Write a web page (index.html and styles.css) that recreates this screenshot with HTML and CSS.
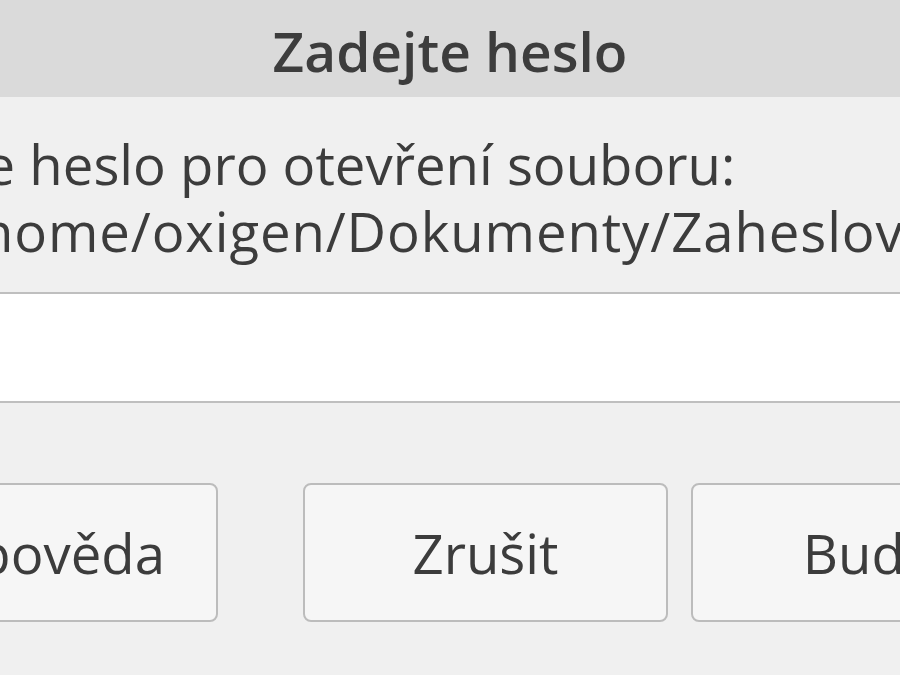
FILE: index.html
```html
<!DOCTYPE html>
<html lang="cs">
<head>
<meta charset="utf-8">
<title>Zadejte heslo</title>
<link rel="stylesheet" href="styles.css">
</head>
<body>
<div class="dialog">
  <header class="titlebar">Zadejte heslo</header>
  <div class="message">
    <div class="line line-prompt">Zadejte heslo pro otevření souboru:</div>
    <div class="line line-path">/home/oxigen/Dokumenty/Zaheslovaný.odt</div>
  </div>
  <div class="entry" aria-label="Heslo"></div>
  <div class="buttons">
    <button class="btn btn-help">Nápověda</button>
    <button class="btn">Zrušit</button>
    <button class="btn">Budiž</button>
  </div>
</div>
</body>
</html>
```

FILE: styles.css
```css
html, body {
  margin: 0;
  padding: 0;
  width: 900px;
  height: 675px;
  overflow: hidden;
  background: #f0f0f0;
}

.dialog {
  width: 900px;
  height: 675px;
  overflow: hidden;
  font-family: "Open Sans", "Noto Sans", sans-serif;
  color: #3c3c3c;
  background: #f0f0f0;
}

.titlebar {
  box-sizing: border-box;
  height: 97px;
  padding-top: 4px;
  line-height: 93px;
  text-align: center;
  font-size: 55px;
  font-weight: 600;
  color: #3d3d3d;
  background: #dadada;
  white-space: nowrap;
}

.message {
  padding: 34px 0 27px;
  font-size: 54.5px;
  line-height: 67px;
  white-space: nowrap;
}

.line-prompt {
  margin-left: -174px;
}

.line-path {
  margin-left: -41px;
  letter-spacing: 0.9px;
}

.entry {
  box-sizing: border-box;
  height: 111px;
  background: #ffffff;
  border-top: 2px solid #bfbfbf;
  border-bottom: 2px solid #bfbfbf;
}

.buttons {
  display: flex;
  gap: 23px;
  margin-top: 80px;
  margin-left: -147px;
}

.btn {
  box-sizing: border-box;
  flex: 0 0 365px;
  height: 139px;
  padding: 0;
  border: 2px solid #bcbcbc;
  border-radius: 8px;
  background: #f6f6f6;
  font-family: "Open Sans", "Noto Sans", sans-serif;
  font-size: 54.5px;
  color: #3c3c3c;
  text-align: center;
  white-space: nowrap;
}

.btn-help {
  margin-right: 62px;
}
```
